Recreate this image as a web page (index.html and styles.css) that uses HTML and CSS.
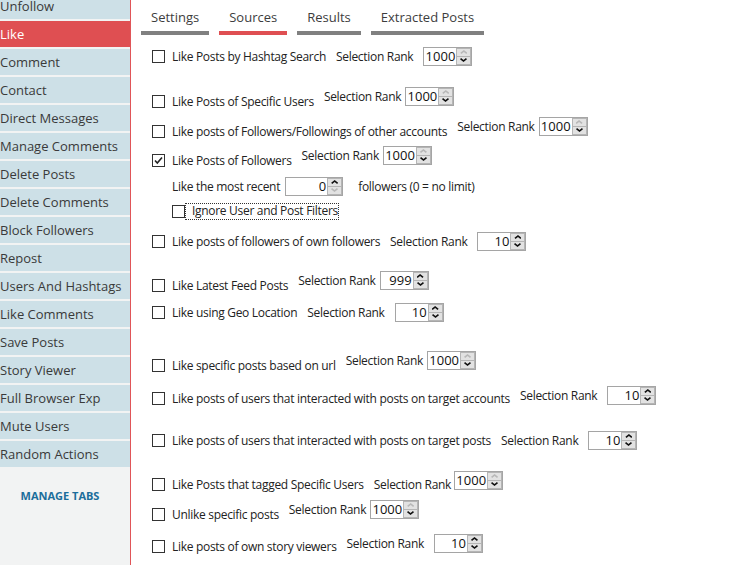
FILE: index.html
```html
<!DOCTYPE html>
<html lang="en">

<head>
    <meta charset="UTF-8">
    <title>Like - Sources</title>
    <link rel="stylesheet" href="styles.css">
</head>

<body>
    <div class="app">
        <!-- Left side menu -->
        <aside class="sidebar">
            <ul class="menu">
                <li>Unfollow</li>
                <li class="active">Like</li>
                <li>Comment</li>
                <li>Contact</li>
                <li>Direct Messages</li>
                <li>Manage Comments</li>
                <li>Delete Posts</li>
                <li>Delete Comments</li>
                <li>Block Followers</li>
                <li>Repost</li>
                <li>Users And Hashtags</li>
                <li>Like Comments</li>
                <li>Save Posts</li>
                <li>Story Viewer</li>
                <li>Full Browser Exp</li>
                <li>Mute Users</li>
                <li>Random Actions</li>
            </ul>
            <a class="manage" href="#">MANAGE TABS</a>
        </aside>

        <main class="main">
            <nav class="tabs">
                <span class="tab">Settings</span>
                <span class="tab active">Sources</span>
                <span class="tab">Results</span>
                <span class="tab">Extracted Posts</span>
            </nav>

            <div class="sources">
                <div class="row first">
                    <label class="check"><span class="box"></span>Like Posts by Hashtag Search</label>
                    <span class="rank"><span>Selection Rank</span>
                        <span class="spin far"><span class="val">1000</span><span class="btns"><span class="btn up off"></span><span class="btn down"></span></span></span>
                    </span>
                </div>

                <div class="row g25">
                    <label class="check"><span class="box"></span>Like Posts of Specific Users</label>
                    <span class="rank lift"><span>Selection Rank</span>
                        <span class="spin"><span class="val">1000</span><span class="btns"><span class="btn up off"></span><span class="btn down"></span></span></span>
                    </span>
                </div>

                <div class="row g10">
                    <label class="check"><span class="box"></span>Like posts of Followers/Followings of other accounts</label>
                    <span class="rank lift"><span>Selection Rank</span>
                        <span class="spin"><span class="val">1000</span><span class="btns"><span class="btn up off"></span><span class="btn down"></span></span></span>
                    </span>
                </div>

                <div class="row g9">
                    <label class="check"><span class="box checked"><svg viewBox="0 0 11 11" width="11" height="11"><path d="M2 5.5 L4.3 8 L9 2.5" fill="none" stroke="#222" stroke-width="1.6"/></svg></span>Like Posts of Followers</label>
                    <span class="rank lift"><span>Selection Rank</span>
                        <span class="spin"><span class="val">1000</span><span class="btns"><span class="btn up off"></span><span class="btn down"></span></span></span>
                    </span>
                </div>

                <div class="row sub g6">
                    <span>Like the most recent</span>
                    <span class="spin wide"><span class="val">0</span><span class="btns"><span class="btn up"></span><span class="btn down off"></span></span></span>
                    <span class="note">followers (0 = no limit)</span>
                </div>

                <div class="row sub g5">
                    <label class="check focus"><span class="box"></span><span class="focus-text">Ignore User and Post Filters</span></label>
                </div>

                <div class="row g10">
                    <label class="check"><span class="box"></span>Like posts of followers of own followers</label>
                    <span class="rank"><span>Selection Rank</span>
                        <span class="spin far"><span class="val">10</span><span class="btns"><span class="btn up"></span><span class="btn down"></span></span></span>
                    </span>
                </div>

                <div class="row g24">
                    <label class="check"><span class="box"></span>Like Latest Feed Posts</label>
                    <span class="rank lift"><span>Selection Rank</span>
                        <span class="spin"><span class="val">999</span><span class="btns"><span class="btn up"></span><span class="btn down"></span></span></span>
                    </span>
                </div>

                <div class="row g7">
                    <label class="check"><span class="box"></span>Like using Geo Location</label>
                    <span class="rank"><span>Selection Rank</span>
                        <span class="spin far"><span class="val">10</span><span class="btns"><span class="btn up"></span><span class="btn down"></span></span></span>
                    </span>
                </div>

                <div class="row g33">
                    <label class="check"><span class="box"></span>Like specific posts based on url</label>
                    <span class="rank lift"><span>Selection Rank</span>
                        <span class="spin"><span class="val">1000</span><span class="btns"><span class="btn up off"></span><span class="btn down"></span></span></span>
                    </span>
                </div>

                <div class="row g13">
                    <label class="check"><span class="box"></span>Like posts of users that interacted with posts on target accounts</label>
                    <span class="rank lift-s"><span>Selection Rank</span>
                        <span class="spin far"><span class="val">10</span><span class="btns"><span class="btn up"></span><span class="btn down"></span></span></span>
                    </span>
                </div>

                <div class="row g22">
                    <label class="check"><span class="box"></span>Like posts of users that interacted with posts on target posts</label>
                    <span class="rank"><span>Selection Rank</span>
                        <span class="spin far"><span class="val">10</span><span class="btns"><span class="btn up"></span><span class="btn down"></span></span></span>
                    </span>
                </div>

                <div class="row g24">
                    <label class="check"><span class="box"></span>Like Posts that tagged Specific Users</label>
                    <span class="rank"><span>Selection Rank</span>
                        <span class="spin high"><span class="val">1000</span><span class="btns"><span class="btn up off"></span><span class="btn down"></span></span></span>
                    </span>
                </div>

                <div class="row g10">
                    <label class="check"><span class="box"></span>Unlike specific posts</label>
                    <span class="rank lift"><span>Selection Rank</span>
                        <span class="spin"><span class="val">1000</span><span class="btns"><span class="btn up off"></span><span class="btn down"></span></span></span>
                    </span>
                </div>

                <div class="row g12">
                    <label class="check"><span class="box"></span>Like posts of own story viewers</label>
                    <span class="rank lift-s"><span>Selection Rank</span>
                        <span class="spin far"><span class="val">10</span><span class="btns"><span class="btn up"></span><span class="btn down"></span></span></span>
                    </span>
                </div>
            </div>
        </main>
    </div>
</body>

</html>
```

FILE: styles.css
```css
body {
    margin: 0;
    font-family: "Open Sans", "Noto Sans", sans-serif;
    color: #222;
    background: #fff;
    overflow: hidden;
}

.app {
    display: flex;
    height: 565px;
}

/* Side menu */
.sidebar {
    width: 130px;
    flex-shrink: 0;
    background: #f2f3f3;
    border-right: 1px solid #e05558;
    overflow: hidden;
}

.menu {
    list-style: none;
    margin: -7px 0 0 0;
    /* list is scrolled down a little */
    padding: 0;
}

.menu li {
    height: 26px;
    line-height: 26px;
    margin-bottom: 2px;
    background: #cde0e7;
    color: #3a3a3a;
    font-size: 13px;
    white-space: nowrap;
}

.menu li.active {
    background: #df4f52;
    color: #fff;
}

.manage {
    display: block;
    margin-top: 21px;
    padding-right: 10px;
    text-align: center;
    font-size: 11px;
    font-weight: bold;
    color: #1c6e9b;
    text-decoration: none;
}

/* Main area */
.main {
    flex: 1;
    padding-left: 10px;
}

.tabs {
    display: flex;
    gap: 10px;
}

.tab {
    padding: 7px 10px 4px;
    line-height: 20px;
    font-size: 13px;
    color: #3d3d3d;
    border-bottom: 4px solid #808080;
}

.tab.active {
    border-bottom-color: #df4f52;
}

.sources {
    padding: 0 0 0 11px;
    font-size: 12px;
    letter-spacing: -0.3px;
}

.row {
    display: flex;
    align-items: center;
    height: 20px;
    white-space: nowrap;
}

.row.first { margin-top: 11px; }
.row.g5 { margin-top: 5px; }
.row.g6 { margin-top: 6px; }
.row.g7 { margin-top: 7px; }
.row.g9 { margin-top: 9px; }
.row.g10 { margin-top: 10px; }
.row.g12 { margin-top: 12px; }
.row.g13 { margin-top: 13px; }
.row.g22 { margin-top: 22px; }
.row.g24 { margin-top: 24px; }
.row.g25 { margin-top: 25px; }
.row.g33 { margin-top: 33px; }

/* second level options sit under the label text */
.row.sub {
    padding-left: 20px;
}

.check {
    display: flex;
    align-items: center;
}

.box {
    width: 13px;
    height: 13px;
    box-sizing: border-box;
    border: 1px solid #333;
    background: #fff;
    margin-right: 7px;
    display: flex;
    align-items: center;
    justify-content: center;
}

.check.focus .box {
    margin-right: 0;
}

.focus-text {
    border: 1px dotted #333;
    padding: 0 0 1px 6px;
    line-height: 14px;
}

.rank {
    display: flex;
    align-items: center;
    margin-left: 10px;
}

.rank.lift {
    margin-bottom: 10px;
}

.rank.lift-s {
    margin-bottom: 6px;
}

/* Numeric up/down box */
.spin {
    display: flex;
    width: 49px;
    height: 19px;
    margin-left: 4px;
    box-sizing: border-box;
    border: 1px solid #a5a5a5;
    background: #fff;
    letter-spacing: 0;
}

.spin.far {
    margin-left: 10px;
}

.spin.high {
    margin-left: 3px;
    margin-bottom: 8px;
}

.spin.wide {
    width: 58px;
    margin-left: 5px;
}

.spin .val {
    flex: 1;
    text-align: right;
    padding-right: 1px;
    font-size: 13px;
    line-height: 16px;
    color: #111;
}

.btns {
    width: 15px;
    display: flex;
    flex-direction: column;
}

.btn {
    flex: 1;
    background: #e2e2e2;
    border: 1px solid #b5b5b5;
    display: flex;
    align-items: center;
    justify-content: center;
}

.btn + .btn {
    border-top: none;
}

.btn::before {
    content: "";
    width: 7px;
    height: 4px;
    background: #111;
    clip-path: polygon(50% 0, 100% 70%, 85% 100%, 50% 50%, 15% 100%, 0 70%);
}

.btn.down::before {
    transform: rotate(180deg);
}

.btn.off::before {
    background: #b8b8b8;
}

.note {
    margin-left: 15px;
}
```
